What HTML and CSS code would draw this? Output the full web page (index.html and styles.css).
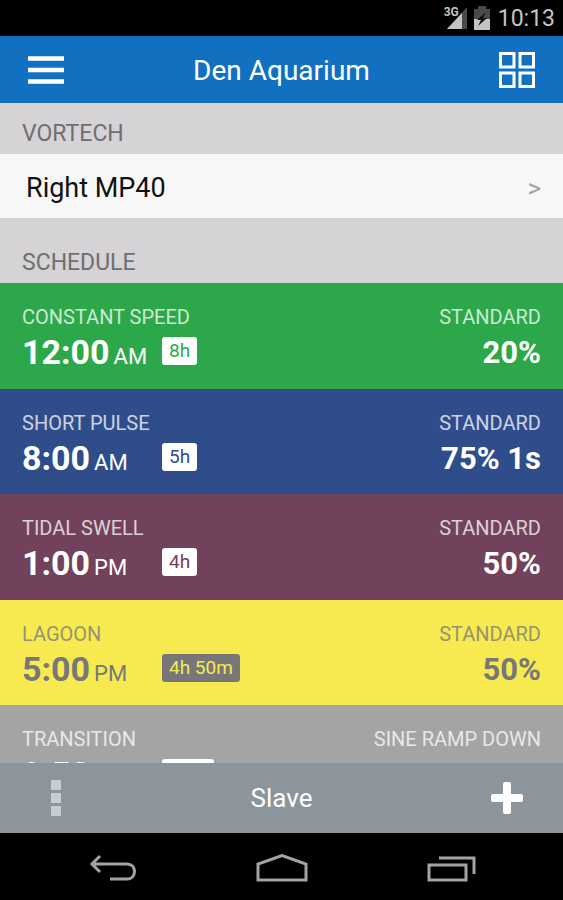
FILE: index.html
```
<!DOCTYPE html>
<html lang="en">
<head>
  <meta charset="UTF-8" />
  <meta name="viewport" content="width=device-width, initial-scale=1.0">
  <title>Den Aquarium</title>
  <link rel="stylesheet" href="styles.css">
</head>
<body>
  <!-- Status bar -->
  <div class="status-bar">
    <span class="network">3G</span>
    <svg class="signal" width="20" height="22" viewBox="0 0 20 22" aria-hidden="true">
      <path d="M0 22L20 0V22Z" fill="#4a4a4a" />
      <path d="M0 22L15 6V22Z" fill="#c4c4c4" />
    </svg>
    <svg class="battery" width="16" height="24" viewBox="0 0 16 24" aria-hidden="true">
      <path d="M4 0H12V3H16V24H0V3H4Z" fill="#4a4a4a" />
      <path d="M0 13H16V24H0Z" fill="#c4c4c4" />
      <path d="M12 6L3 14H7L4 20L13 12H9Z" fill="#111" />
    </svg>
    <span class="clock">10:13</span>
  </div>

  <header class="app-header">
    <button class="icon-button" type="button" aria-label="Menu">
      <svg width="36" height="28" viewBox="0 0 36 28">
        <path d="M0 2.5H36M0 14H36M0 25.5H36" stroke="#fff" stroke-width="4.5" />
      </svg>
    </button>
    <h1>Den Aquarium</h1>
    <button class="icon-button" type="button" aria-label="Overview">
      <svg width="36" height="36" viewBox="0 0 36 36" fill="none" stroke="#fff" stroke-width="3">
        <rect x="1.5" y="1.5" width="13.5" height="13.5" />
        <rect x="21" y="1.5" width="13.5" height="13.5" />
        <rect x="1.5" y="21" width="13.5" height="13.5" />
        <rect x="21" y="21" width="13.5" height="13.5" />
      </svg>
    </button>
  </header>

  <main>
    <h2 class="section-title">VORTECH</h2>
    <a class="device" href="#">
      <span>Right MP40</span>
      <span class="chevron">&gt;</span>
    </a>

    <h2 class="section-title schedule-title">SCHEDULE</h2>
    <ul class="schedule">
      <li class="entry constant">
        <div class="labels"><span>CONSTANT SPEED</span><span>STANDARD</span></div>
        <div class="values">
          <span class="time">12:00<small>AM</small></span>
          <span class="badge">8h</span>
          <strong class="level">20%</strong>
        </div>
      </li>
      <li class="entry pulse">
        <div class="labels"><span>SHORT PULSE</span><span>STANDARD</span></div>
        <div class="values">
          <span class="time">8:00<small>AM</small></span>
          <span class="badge">5h</span>
          <strong class="level">75% 1s</strong>
        </div>
      </li>
      <li class="entry tidal">
        <div class="labels"><span>TIDAL SWELL</span><span>STANDARD</span></div>
        <div class="values">
          <span class="time">1:00<small>PM</small></span>
          <span class="badge">4h</span>
          <strong class="level">50%</strong>
        </div>
      </li>
      <li class="entry lagoon">
        <div class="labels"><span>LAGOON</span><span>STANDARD</span></div>
        <div class="values">
          <span class="time">5:00<small>PM</small></span>
          <span class="badge">4h 50m</span>
          <strong class="level">50%</strong>
        </div>
      </li>
      <li class="entry transition">
        <div class="labels"><span>TRANSITION</span><span>SINE RAMP DOWN</span></div>
        <div class="values">
          <span class="time">9:50<small>PM</small></span>
          <span class="badge">10m</span>
        </div>
      </li>
    </ul>
  </main>

  <footer class="toolbar">
    <button class="icon-button" type="button" aria-label="More">
      <svg width="10" height="36" viewBox="0 0 10 36" fill="#c6ced3">
        <rect width="10" height="10" />
        <rect y="13" width="10" height="10" />
        <rect y="26" width="10" height="10" />
      </svg>
    </button>
    <button class="slave" type="button">Slave</button>
    <button class="icon-button" type="button" aria-label="Add">
      <svg width="32" height="32" viewBox="0 0 32 32" fill="#fff">
        <rect x="12" y="0" width="8" height="32" rx="2" />
        <rect x="0" y="12" width="32" height="8" rx="2" />
      </svg>
    </button>
  </footer>

  <nav class="nav-bar">
    <button class="icon-button" type="button" aria-label="Back">
      <svg width="48" height="28" viewBox="0 0 48 28">
        <path d="M11 2L3 10L11 18M3 10H38C48 10 48 25 38 25H21" />
      </svg>
    </button>
    <button class="icon-button" type="button" aria-label="Home">
      <svg width="52" height="28" viewBox="0 0 52 28">
        <path d="M2 26V10L26 1.5L50 10V26Z" />
      </svg>
    </button>
    <button class="icon-button" type="button" aria-label="Recent apps">
      <svg width="50" height="28" viewBox="0 0 50 28">
        <path d="M2 11H39V26H2ZM12 4H47V20" />
      </svg>
    </button>
  </nav>
</body>
</html>
```
FILE: styles.css
```
:root {
  --header-bg: #1270c0;
  --section-bg: #d5d3d6;
  --toolbar-bg: #8c959b;
  --side: 22px;
}

* {
  box-sizing: border-box;
}

body {
  margin: 0;
  height: 100vh;
  display: flex;
  flex-direction: column;
  background: #000;
  color: #fff;
  font-family: Roboto, sans-serif;
}

button {
  padding: 0;
  border: 0;
  background: none;
  color: inherit;
  font: inherit;
}

.icon-button {
  display: flex;
  align-items: center;
  justify-content: center;
}

/* STATUS BAR */
.status-bar {
  flex: none;
  height: 36px;
  padding-right: 8px;
  display: flex;
  align-items: center;
  justify-content: flex-end;
  color: #c4c4c4;
}
.network {
  align-self: flex-start;
  margin: 6px -12px 0 0;
  font-size: 12px;
  font-weight: bold;
  line-height: 13px;
}
.battery {
  margin: 0 8px 0 7px;
}
.clock {
  font-size: 23px;
}

/* HEADER */
.app-header {
  flex: none;
  height: 67px;
  padding: 0 28px;
  display: flex;
  align-items: center;
  justify-content: space-between;
  background: var(--header-bg);
}
.app-header h1 {
  margin: 0;
  padding-top: 2px;
  font-size: 28px;
  font-weight: normal;
}

/* CONTENT */
main {
  flex: 1;
  min-height: 0;
  overflow: hidden;
  background: var(--section-bg);
}
.section-title {
  margin: 0;
  padding: 18px var(--side) 7px;
  color: #6f6e70;
  font-size: 23px;
  font-weight: normal;
  line-height: 26px;
}
.schedule-title {
  padding-top: 32px;
}
.device {
  height: 64px;
  padding: 4px var(--side) 0 26px;
  display: flex;
  align-items: center;
  justify-content: space-between;
  background: #f7f7f7;
  color: #111;
  font-size: 27px;
  text-decoration: none;
}
.chevron {
  color: #a3a3a3;
  font-size: 26px;
}

/* SCHEDULE */
.schedule {
  margin: 0;
  padding: 0;
  list-style: none;
}
.entry {
  height: 105px;
  padding: 22px var(--side) 0;
}
.entry:nth-child(odd) {
  height: 106px;
}
.labels {
  display: flex;
  justify-content: space-between;
  font-size: 20px;
  line-height: 24px;
  opacity: 0.75;
}
.values {
  height: 44px;
  display: flex;
  align-items: center;
  line-height: 40px;
}
.time {
  width: 140px;
  padding-top: 2px;
  font-size: 34px;
  font-weight: bold;
}
.time small {
  margin-left: 4px;
  font-size: 22px;
  font-weight: normal;
  line-height: 24px;
}
.badge {
  padding: 0 7px;
  border-radius: 3px;
  background: #fff;
  font-size: 19px;
  line-height: 28px;
}
.level {
  margin-left: auto;
  padding-top: 4px;
  font-size: 31px;
}

.constant {
  background: #2ca84a;
}
.constant .badge {
  color: #2ca84a;
}
.pulse {
  background: #304d8b;
}
.pulse .badge {
  color: #304d8b;
}
.tidal {
  background: #72415b;
}
.tidal .badge {
  color: #72415b;
}
.lagoon {
  background: #f6ea50;
  color: #77777a;
}
.lagoon .badge {
  background: #77777a;
  color: #f6ea50;
}
.transition {
  background: #a4a4a4;
}
.transition .badge {
  color: #a4a4a4;
}

/* BOTTOM TOOLBAR */
.toolbar {
  flex: none;
  height: 70px;
  padding: 0 40px;
  display: flex;
  align-items: center;
  justify-content: space-between;
  background: var(--toolbar-bg);
}
.toolbar .icon-button {
  width: 32px;
}
.slave {
  font-size: 26px;
}

/* SYSTEM NAVIGATION */
.nav-bar {
  flex: none;
  height: 67px;
  padding: 2px 86px 0 89px;
  display: flex;
  align-items: center;
  justify-content: space-between;
}
.nav-bar svg {
  fill: none;
  stroke: #a3a3a3;
  stroke-width: 3;
}
```
